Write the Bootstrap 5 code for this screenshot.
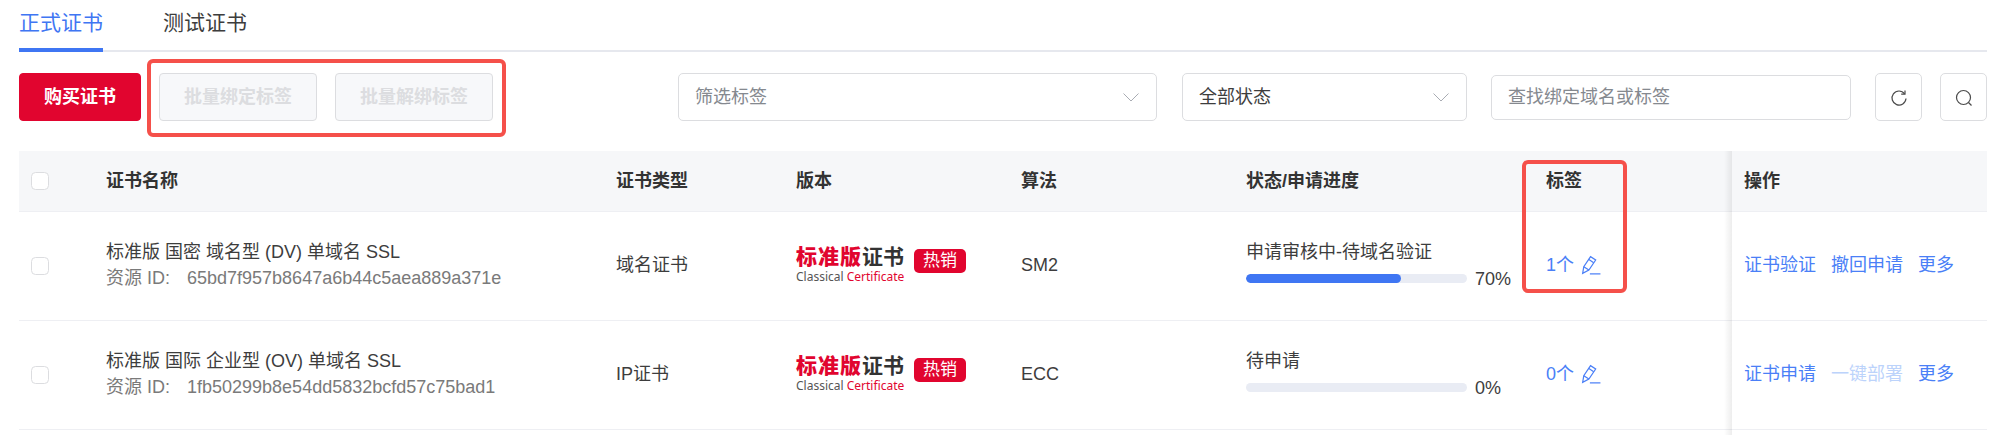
<!DOCTYPE html>
<html lang="zh-CN">
<head>
<meta charset="utf-8">
<title>证书列表</title>
<link rel="stylesheet" href="https://cdn.jsdelivr.net/npm/bootstrap@5.3.0/dist/css/bootstrap.min.css">
<style>
html,body{height:435px;overflow:hidden}
body{background:#fff;color:#3d3d3d;font-family:"Liberation Sans","Noto Sans CJK SC",sans-serif;font-size:18px}
.cert-page{padding:0 15px 0 19px;height:435px;overflow:hidden}
.cert-tabs{height:52px;border-bottom:2px solid #e6e8ee;gap:60px}
.cert-tab{height:52px;padding-top:7px;font-size:21px;line-height:32px;color:#3d3d3d;text-decoration:none;white-space:nowrap}
.cert-tab.on{color:#3f76f3;border-bottom:4px solid #3f76f3;margin-top:-1px;padding-top:8px;height:53px}
.cert-bar{height:48px;margin-top:21px;margin-bottom:30px}
.btn-buy,.btn-buy:hover{background:#e1052f;border-color:#e1052f;color:#fff;width:122px;height:48px;font-size:18px;font-weight:700;padding:0;border-radius:4px}
.btn-batch,.btn-batch:disabled{background:#f7f8fa;border:1px solid #dcdde0;color:#dcdde0;width:158px;height:48px;font-size:18px;font-weight:700;padding:0;border-radius:4px;opacity:1;margin-left:18px}
.btn-batch + .btn-batch{margin-left:18px}
.sel-tag,.sel-status,.inp-find{height:48px;font-size:18px;border:1.5px solid #dcdde0;border-radius:5px;padding:0 16px;box-shadow:none;color:#3d3d3d}
.sel-tag,.sel-status{background-image:url("data:image/svg+xml,%3Csvg xmlns='http://www.w3.org/2000/svg' viewBox='0 0 16 9'%3E%3Cpath d='M.5.5 8 8 15.5.5' fill='none' stroke='%23a9acb3' stroke-width='1'/%3E%3C/svg%3E");background-size:16px 9px;background-position:right 17px center}
.sel-tag{width:479px;color:#85898f;margin-left:auto}
.sel-status{width:285px;margin-left:25px}
.inp-find{width:360px;height:45px;margin-left:24px}
.inp-find::placeholder{color:#85898f;opacity:1}
.btn-ico{width:47px;height:48px;padding:0;border:1.5px solid #dcdde0;border-radius:5px;background:#fff;margin-left:24px;color:#4a4a4a}
.btn-ico + .btn-ico{margin-left:18px}
.cert-table{table-layout:fixed;width:1968px;margin:0;border-collapse:separate;border-spacing:0;color:#3d3d3d}
.cert-table th,.cert-table td{padding:0 0 0 12px;vertical-align:middle;border-bottom:1px solid #eeeff3;font-size:18px;background:#fff;box-shadow:none;color:#3d3d3d}
.cert-table thead th{height:61px;background:#f6f7f9;font-weight:700;color:#333}
.cert-table tbody td{height:109px;padding-bottom:2px}
.cert-table tbody td.cell-chk{padding-bottom:0}
.cert-table tbody tr.tail-row td{height:10px;border:0;padding:0}
.cert-table .col-fix{position:relative;z-index:1}
.cert-table .col-fix::before{content:"";position:absolute;left:-8px;top:0;bottom:-1px;width:8px;background:linear-gradient(to left,rgba(0,0,0,.07),rgba(0,0,0,0))}
.chk-cert{width:18px;height:18px;margin:0;display:block;border:1px solid #dcdde0;border-radius:3px}
.cert-name{line-height:26px;white-space:nowrap}
.cert-id{color:#7a7a7a}
.cert-val{margin-left:2px}
.ver-wrap{width:170px}
.ver-logo{width:110px;white-space:nowrap;margin-top:-2px}
.ver-main{font-size:21px;line-height:24px;font-weight:700;color:#333}
.ver-main b{color:#e1052f;letter-spacing:1px}
.ver-sub{font-family:"Noto Sans",sans-serif;font-size:12px;line-height:15px;color:#555}
.ver-sub i{font-style:normal;color:#e1052f}
.hot-tag{width:52px;height:24px;line-height:23px;background:#e1052f;color:#fff;border-radius:5px;font-size:17px;text-align:center;margin-left:8px;margin-bottom:9px}
.st-text{line-height:26px;white-space:nowrap}
.st-line{margin-top:-1px;height:32px;margin-bottom:-4px}
.st-track{width:221px;height:9px;background:#e9ecf4;border-radius:5px;margin-right:8px;margin-bottom:2px}
.st-fill{background:#3f76f3;border-radius:5px}
.tag-link{color:#4a7ff7;text-decoration:none;white-space:nowrap}
.tag-link svg{margin-left:7px;vertical-align:-4px}
.act-link{color:#4a7ff7;text-decoration:none;margin-right:15px;white-space:nowrap}
.act-link.off{color:#bcd3fb}
.mark-box{position:absolute;border:4px solid #f5504a;border-radius:6px;pointer-events:none;z-index:5}
.mark-batch{left:147px;top:59px;width:359px;height:78px}
.mark-label{left:1522px;top:160px;width:105px;height:133px}
</style>
</head>
<body>
<div class="position-relative">
<div class="cert-page">
  <nav class="d-flex cert-tabs">
    <a class="cert-tab on" href="#">正式证书</a>
    <a class="cert-tab" href="#">测试证书</a>
  </nav>
  <div class="d-flex align-items-center cert-bar">
    <button class="btn btn-buy" type="button">购买证书</button>
    <button class="btn btn-batch" type="button" disabled>批量绑定标签</button>
    <button class="btn btn-batch" type="button" disabled>批量解绑标签</button>
    <select class="form-select sel-tag"><option>筛选标签</option></select>
    <select class="form-select sel-status"><option>全部状态</option></select>
    <input class="form-control inp-find" type="text" placeholder="查找绑定域名或标签">
    <button class="btn btn-ico" type="button" aria-label="刷新">
      <svg width="18" height="18" viewBox="0 0 18 18" fill="none" stroke="currentColor" stroke-width="1.2"><path d="M14.6 4.8A7 7 0 1 0 16 9.5"/><path d="M15 1.4v3.8h-3.8"/></svg>
    </button>
    <button class="btn btn-ico" type="button" aria-label="搜索">
      <svg width="18" height="18" viewBox="0 0 18 18" fill="none" stroke="currentColor" stroke-width="1.2"><circle cx="8.5" cy="8.5" r="7"/><path d="M13.5 13.5l3 3"/></svg>
    </button>
  </div>
  <table class="table cert-table">
    <colgroup><col style="width:75px"><col style="width:510px"><col style="width:180px"><col style="width:225px"><col style="width:225px"><col style="width:300px"><col style="width:198px"><col style="width:255px"></colgroup>
    <thead>
      <tr>
        <th><input class="form-check-input chk-cert" type="checkbox" aria-label="全选"></th>
        <th>证书名称</th><th>证书类型</th><th>版本</th><th>算法</th><th>状态/申请进度</th><th>标签</th><th class="col-fix">操作</th>
      </tr>
    </thead>
    <tbody>
      <tr>
        <td class="cell-chk"><input class="form-check-input chk-cert" type="checkbox" aria-label="选择"></td>
        <td><div class="cert-name">标准版 国密 域名型 (DV) 单域名 SSL</div><div class="cert-name cert-id">资源 ID: &nbsp; <span class="cert-val">65bd7f957b8647a6b44c5aea889a371e</span></div></td>
        <td>域名证书</td>
        <td><div class="d-flex align-items-center ver-wrap"><div class="ver-logo"><div class="ver-main"><b>标准版</b>证书</div><div class="ver-sub">Classical <i>Certificate</i></div></div><div class="hot-tag flex-shrink-0">热销</div></div></td>
        <td>SM2</td>
        <td><div class="st-text">申请审核中-待域名验证</div><div class="d-flex align-items-center st-line"><div class="progress st-track"><div class="progress-bar st-fill" style="width:70%"></div></div><span>70%</span></div></td>
        <td><a class="tag-link" href="#">1个<svg width="20" height="20" viewBox="0 0 18 18" fill="none" stroke="currentColor" stroke-width="1.1"><path d="M1.5 16.5l1-6L8.6 1.5l4.6 3-6.1 9z"/><path d="M6.8 3.9l4.6 3M2.5 10.5l4.6 3"/><path d="M8 17h9.5"/></svg></a></td>
        <td class="col-fix"><a class="act-link" href="#">证书验证</a><a class="act-link" href="#">撤回申请</a><a class="act-link" href="#">更多</a></td>
      </tr>
      <tr>
        <td class="cell-chk"><input class="form-check-input chk-cert" type="checkbox" aria-label="选择"></td>
        <td><div class="cert-name">标准版 国际 企业型 (OV) 单域名 SSL</div><div class="cert-name cert-id">资源 ID: &nbsp; <span class="cert-val">1fb50299b8e54dd5832bcfd57c75bad1</span></div></td>
        <td>IP证书</td>
        <td><div class="d-flex align-items-center ver-wrap"><div class="ver-logo"><div class="ver-main"><b>标准版</b>证书</div><div class="ver-sub">Classical <i>Certificate</i></div></div><div class="hot-tag flex-shrink-0">热销</div></div></td>
        <td>ECC</td>
        <td><div class="st-text">待申请</div><div class="d-flex align-items-center st-line"><div class="progress st-track"><div class="progress-bar st-fill" style="width:0%"></div></div><span>0%</span></div></td>
        <td><a class="tag-link" href="#">0个<svg width="20" height="20" viewBox="0 0 18 18" fill="none" stroke="currentColor" stroke-width="1.1"><path d="M1.5 16.5l1-6L8.6 1.5l4.6 3-6.1 9z"/><path d="M6.8 3.9l4.6 3M2.5 10.5l4.6 3"/><path d="M8 17h9.5"/></svg></a></td>
        <td class="col-fix"><a class="act-link" href="#">证书申请</a><a class="act-link off" href="#">一键部署</a><a class="act-link" href="#">更多</a></td>
      </tr>
      <tr class="tail-row"><td></td><td></td><td></td><td></td><td></td><td></td><td></td><td class="col-fix"></td></tr>
    </tbody>
  </table>
</div>
<div class="mark-box mark-batch"></div>
<div class="mark-box mark-label"></div>
</div>
<script src="https://cdn.jsdelivr.net/npm/bootstrap@5.3.0/dist/js/bootstrap.bundle.min.js"></script>
</body>
</html>
